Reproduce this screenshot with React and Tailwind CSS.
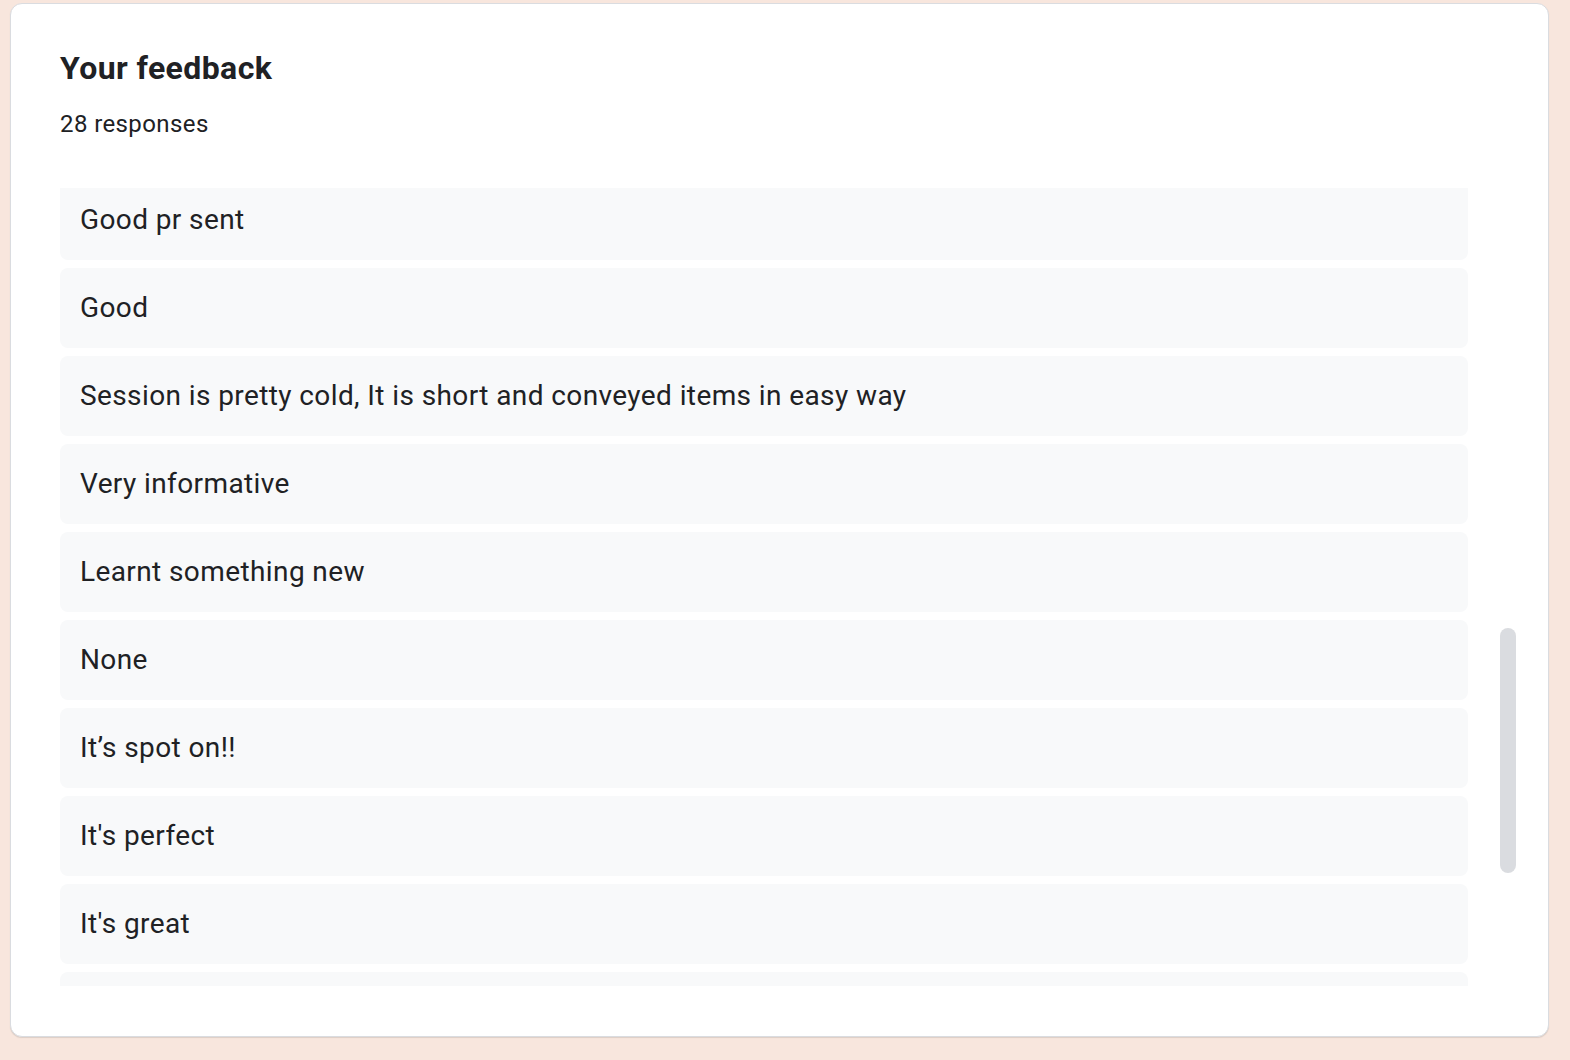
const answers = [
  "Good pr sent",
  "Good",
  "Session is pretty cold, It is short and conveyed items in easy way",
  "Very informative",
  "Learnt something new",
  "None",
  "It’s spot on!!",
  "It's perfect",
  "It's great",
  "",
];

export default function App() {
  return (
    <div
      className="min-h-screen w-full bg-[#f8e6dd] pt-[3px] pl-[10px] pr-[21px] pb-[23px]"
      style={{ fontFamily: "Roboto, 'Noto Sans', Arial, sans-serif" }}
    >
      <div className="h-[1034px] w-[1539px] rounded-[12px] border border-[#dadce0] bg-white pl-[49px] pt-[40px] shadow-[0_1px_1px_rgba(60,64,67,0.15)]">
        <h2 className="text-[32px] font-bold leading-[48px] tracking-[0.4px] text-[#202124]">
          Your feedback
        </h2>
        <p className="mt-[18px] text-[24px] leading-[28px] tracking-[0.4px] text-[#202124]">
          28 responses
        </p>

        <div className="mt-[50px] flex">
          {/* scrolled answer list */}
          <div className="h-[798px] w-[1408px] overflow-hidden">
            <div className="mt-[-8px] flex flex-col gap-[8px]">
              {answers.map((a, i) => (
                <div
                  key={i}
                  className="flex h-[80px] items-center rounded-[8px] bg-[#f8f9fa] px-[20px] text-[28px] tracking-[0.4px] text-[#202124]"
                >
                  {a}
                </div>
              ))}
            </div>
          </div>

          {/* scrollbar */}
          <div className="ml-[32px] w-[16px]">
            <div className="mt-[440px] h-[245px] w-[16px] rounded-full bg-[#dadce0]" />
          </div>
        </div>
      </div>
    </div>
  );
}
